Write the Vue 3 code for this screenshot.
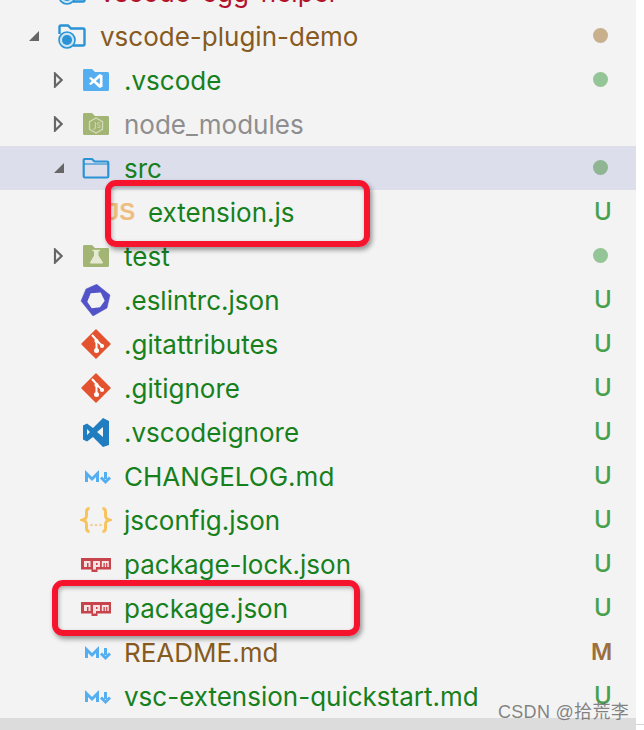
<script setup>
const rows = [
  { name: 'vscode-egg-helper', indent: 100, color: 'red', icon: 'root' },
  { name: 'vscode-plugin-demo', indent: 100, color: 'brown', icon: 'root', arrow: 'open', arrowX: 28, badge: 'dot', badgeColor: 'tan' },
  { name: '.vscode', indent: 124, color: 'green', icon: 'vsfolder', arrow: 'closed', arrowX: 53, badge: 'dot', badgeColor: 'lime' },
  { name: 'node_modules', indent: 124, color: 'grey', icon: 'node', arrow: 'closed', arrowX: 53 },
  { name: 'src', indent: 124, color: 'green', icon: 'folder', arrow: 'open', arrowX: 53, badge: 'dot', badgeColor: 'sel', selected: true },
  { name: 'extension.js', indent: 148, color: 'green', icon: 'js', badge: 'U' },
  { name: 'test', indent: 124, color: 'green', icon: 'testfolder', arrow: 'closed', arrowX: 53, badge: 'dot', badgeColor: 'lime' },
  { name: '.eslintrc.json', indent: 124, color: 'green', icon: 'eslint', badge: 'U' },
  { name: '.gitattributes', indent: 124, color: 'green', icon: 'git', badge: 'U' },
  { name: '.gitignore', indent: 124, color: 'green', icon: 'git', badge: 'U' },
  { name: '.vscodeignore', indent: 124, color: 'green', icon: 'vs', badge: 'U' },
  { name: 'CHANGELOG.md', indent: 124, color: 'green', icon: 'md', badge: 'U' },
  { name: 'jsconfig.json', indent: 124, color: 'green', icon: 'json', badge: 'U' },
  { name: 'package-lock.json', indent: 124, color: 'green', icon: 'npm', badge: 'U' },
  { name: 'package.json', indent: 124, color: 'green', icon: 'npm', badge: 'U' },
  { name: 'README.md', indent: 124, color: 'brown', icon: 'md', badge: 'M' },
  { name: 'vsc-extension-quickstart.md', indent: 124, color: 'green', icon: 'md', badge: 'U' },
]
const folderPath = 'M3 6.500C3 5.600 3.600 5 4.500 5H12l3 3h12.500c.9 0 1.500.6 1.500 1.500v16c0 .9-.6 1.500-1.500 1.500h-23C3.600 27 3 26.400 3 25.500Z'
</script>

<template>
  <div class="shot">
    <div class="panel">
      <div class="list">
        <div v-for="r in rows" :key="r.name" class="row" :class="{ selected: r.selected }">
          <svg v-if="r.arrow === 'open'" class="arrow" :style="{ left: r.arrowX + 'px' }" width="12" height="12" viewBox="0 0 12 12">
            <path d="M11 1V11H1Z" fill="#666" />
          </svg>
          <svg v-if="r.arrow === 'closed'" class="arrow" :style="{ left: r.arrowX + 'px' }" width="10" height="16" viewBox="0 0 10 16">
            <path d="M2 1.500 8.600 8 2 14.500Z" fill="none" stroke="#666" stroke-width="2.200" />
          </svg>

          <svg v-if="r.icon !== 'js'" class="icon" :style="{ left: r.indent - 44 + 'px' }" width="32" height="32" viewBox="0 0 32 32">
            <template v-if="r.icon === 'root'">
              <path d="M3.500 14V7C3.500 6 4 5.500 5 5.500H12l3 3h12c1 0 1.500.5 1.500 1.500v14c0 1-.5 1.500-1.500 1.500H17" fill="none" stroke="#2a93d5" stroke-width="2.400" />
              <circle cx="11" cy="20" r="8" fill="#cde5f3" stroke="#2a93d5" stroke-width="1.600" />
              <circle cx="11" cy="20" r="5" fill="#2a93d5" />
            </template>
            <template v-else-if="r.icon === 'vsfolder'">
              <path :d="folderPath" fill="#54aef0" />
              <path d="M19.500 10 13.800 15.200 10.800 13 9 14l2.800 3L9 20l1.800 1 3-2.200 5.700 5.200 3-1.300V11.300ZM19.800 13.800v6.400L15.800 17Z" fill="#fff" fill-rule="evenodd" />
            </template>
            <template v-else-if="r.icon === 'node'">
              <path :d="folderPath" fill="#a3b574" />
              <path d="M16 10l6.500 3.700v7.600L16 25l-6.500-3.700v-7.600Z" fill="none" stroke="#d3dbb4" stroke-width="1.300" />
              <path d="M15.300 14v6.500c0 1.200-1.600 1.200-1.900 0M20 15.200c-1-1-2.700-.7-2.700.5 0 1.700 2.900.9 2.900 2.700 0 1.400-2 1.500-3 .5" fill="none" stroke="#d3dbb4" stroke-width="1" />
            </template>
            <template v-else-if="r.icon === 'folder'">
              <path d="M4.500 7H12l2.500 2.500H27c.8 0 1.300.5 1.300 1.300v13.400c0 .8-.5 1.300-1.300 1.300H5c-.8 0-1.300-.5-1.300-1.300V7.800c0-.5.300-.8.800-.8Z" fill="none" stroke="#2a93d5" stroke-width="2.200" />
              <path d="M4 12h24" stroke="#2a93d5" stroke-width="1.200" />
            </template>
            <template v-else-if="r.icon === 'testfolder'">
              <path :d="folderPath" fill="#a3b574" />
              <path d="M14 10.500h4.500v5l4.300 6.700c.5.800.1 1.400-.8 1.400H11c-.9 0-1.300-.6-.8-1.400l3.800-6.700Z" fill="#e6ead4" />
              <path d="M12.500 10.500h7.500" stroke="#e6ead4" stroke-width="1.400" />
            </template>
            <template v-else-if="r.icon === 'eslint'">
              <path d="M16.700.3 30 11 27 24 13 32 1 17 6 5Z" fill="#5353c9" stroke="#5353c9" stroke-width=".5" stroke-linejoin="round" />
              <path d="M10.700 9.300 20.700 8.500 24.700 16.700 20 23.300 11.700 24.300 7.300 17.700Z" fill="#f3f3f3" />
            </template>
            <template v-else-if="r.icon === 'git'">
              <path d="M16 2 30 16 16 30 2 16Z" fill="#e4532f" stroke="#e4532f" stroke-width="1.500" stroke-linejoin="round" />
              <path d="M12 7l4.500 5v11M16.500 12.500l6 5.500" fill="none" stroke="#fff" stroke-width="2" />
              <circle cx="16.500" cy="22.500" r="2.500" fill="#fff" />
              <circle cx="16.500" cy="13" r="2.100" fill="#fff" />
              <circle cx="22" cy="18" r="2.100" fill="#fff" />
            </template>
            <template v-else-if="r.icon === 'vs'">
              <path d="M23 2 29 5v24l-6 2-10-10-6 4.500-4-2V9.500l4-2L13 12Zm0 9-6 5 6 5ZM7 13v6l3-3Z" fill="#1f7dc0" fill-rule="evenodd" />
            </template>
            <template v-else-if="r.icon === 'md'">
              <path d="M6.500 22V13.500l5.500 5.500 5.500-5.500V22" fill="none" stroke="#54aef0" stroke-width="3" />
              <path d="M25.500 12v7M21 17.500l4.500 4.500 4.500-4.500" fill="none" stroke="#54aef0" stroke-width="3" />
            </template>
            <template v-else-if="r.icon === 'json'">
              <path d="M9.500 4.500C6 4.500 6.500 7 6.500 10.500c0 3.500-.5 4.500-4 5.500 3.500 1 4 2 4 5.500 0 3.500-.5 6 3 6M22.500 4.500c3.500 0 3 2.500 3 6 0 3.500.5 4.500 4 5.500-3.500 1-4 2-4 5.500 0 3.500.5 6-3 6" fill="none" stroke="#f8c35c" stroke-width="3" />
              <circle cx="11.500" cy="21" r="1.300" fill="#f2cd94" />
              <circle cx="16" cy="21" r="1.300" fill="#f2cd94" />
              <circle cx="20.500" cy="21" r="1.300" fill="#f2cd94" />
            </template>
            <template v-else-if="r.icon === 'npm'">
              <path d="M1 10h30v11.500H17.500V24h-6v-2.500H1Z" fill="#c8444c" />
              <path d="M4 13h6.500v6H8.500v-4H7v4H4ZM13 13h7v6h-4v2.500h-3Zm3 2v2h1.500v-2ZM21.800 13h7v6h-1.500v-4h-1.200v4h-1.300v-4h-1.300v4h-1.700Z" fill="#f5e3e3" fill-rule="evenodd" />
            </template>
          </svg>

          <span v-if="r.icon === 'js'" class="js">JS</span>

          <span class="name" :class="r.color" :style="{ marginLeft: r.indent + 'px' }">{{ r.name }}</span>

          <span v-if="r.badge === 'dot'" class="dot" :class="r.badgeColor"></span>
          <span v-else-if="r.badge" class="letter" :class="{ mod: r.badge === 'M' }">{{ r.badge }}</span>
        </div>
      </div>
      <div class="footer"></div>
    </div>

    <div class="mark mark-a"></div>
    <div class="mark mark-b"></div>
    <div class="edge-line"></div>
    <div class="watermark">CSDN @拾荒李</div>
  </div>
</template>

<style scoped>
.shot {
  position: relative;
  width: 644px;
  height: 730px;
  overflow: hidden;
  background: #fff;
  font-family: Inter, "Liberation Sans", sans-serif;
}
.panel {
  width: 636px;
  height: 730px;
  display: flex;
  flex-direction: column;
  justify-content: flex-end;
  background: #f3f3f3;
}
.list {
  display: flex;
  flex-direction: column;
  flex: none;
}
.row {
  position: relative;
  display: flex;
  align-items: center;
  flex: none;
  height: 44px;
}
.selected {
  background: #dcdfeb;
}
.arrow {
  position: absolute;
  top: 50%;
  transform: translateY(-50%);
}
.icon {
  position: absolute;
  top: 6px;
}
.js {
  position: absolute;
  left: 106px;
  top: 8px;
  width: 27px;
  font-family: "Liberation Sans", sans-serif;
  font-size: 24px;
  line-height: 28px;
  font-weight: 700;
  color: #f0bd80;
  text-align: right;
}
.name {
  padding-top: 2px;
  font-size: 26px;
  line-height: 44px;
  white-space: nowrap;
}
.green { color: #16801c; }
.brown { color: #875a1e; }
.grey { color: #8e8e8e; }
.red { color: #b3132a; }
.dot {
  position: absolute;
  left: 593px;
  top: 14px;
  width: 15px;
  height: 15px;
  border-radius: 50%;
}
.tan { background: #c8b08d; }
.lime { background: #94c596; }
.sel { background: #8fb592; }
.letter {
  position: absolute;
  left: 594px;
  top: 0;
  font-size: 24px;
  line-height: 44px;
  font-weight: 500;
  color: #46a04d;
}
.letter.mod {
  left: 591px;
  font-size: 23px;
  font-weight: 600;
  color: #9b6f3e;
}
.footer {
  flex: none;
  height: 12px;
  background: #dcdcdc;
}
.mark {
  position: absolute;
  box-sizing: border-box;
  border: 6px solid #f5132e;
  border-radius: 11px;
  box-shadow: 2px 3px 5px rgba(0, 0, 0, 0.4), inset 1px 2px 4px rgba(0, 0, 0, 0.3);
}
.mark-a {
  left: 105px;
  top: 180px;
  width: 265px;
  height: 67px;
}
.mark-b {
  left: 52px;
  top: 580px;
  width: 308px;
  height: 56px;
}
.edge-line {
  position: absolute;
  left: 636px;
  top: 724px;
  width: 8px;
  height: 1px;
  background: #d4d4d4;
}
.watermark {
  position: absolute;
  left: 498px;
  top: 700px;
  font-family: "Liberation Sans", "Noto Sans CJK SC", sans-serif;
  font-size: 18px;
  line-height: 24px;
  letter-spacing: 0.3px;
  color: rgba(110, 110, 110, 0.85);
  white-space: nowrap;
}
</style>
